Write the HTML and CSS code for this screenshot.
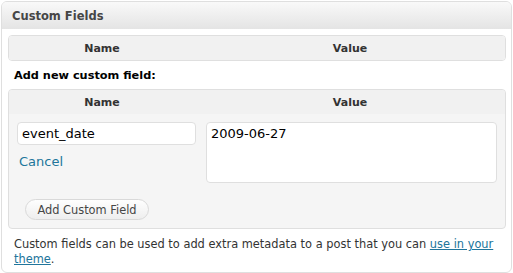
FILE: index.html
```html
<!DOCTYPE html>
<html>
<head>
<meta charset="utf-8">
<link rel="stylesheet" href="styles.css">
</head>
<body>
<div class="postbox">
  <h3 class="hndle">Custom Fields</h3>
  <div class="inside">
    <div class="list-table">
      <div class="thead">
        <div class="th th-name">Name</div>
        <div class="th th-value">Value</div>
      </div>
    </div>
    <p class="add-label">Add new custom field:</p>
    <div class="list-table new-meta">
      <div class="thead">
        <div class="th th-name">Name</div>
        <div class="th th-value">Value</div>
      </div>
      <div class="tbody">
        <div class="cell-name">
          <input class="key-input" type="text" value="event_date">
          <a class="cancel" href="#">Cancel</a>
        </div>
        <div class="cell-value">
          <textarea class="value-input">2009-06-27</textarea>
        </div>
      </div>
      <div class="submit-row">
        <button class="button">Add Custom Field</button>
      </div>
    </div>
    <p class="help">Custom fields can be used to add extra metadata to a post that you can <a href="#">use in your theme</a>.</p>
  </div>
</div>
</body>
</html>
```
FILE: styles.css
```css
* { box-sizing: border-box; }
html, body { margin: 0; padding: 0; background: #ffffff; }
body {
  font-family: "DejaVu Sans", Verdana, sans-serif;
  font-size: 11px;
  color: #333333;
}
.postbox {
  margin: 1px 0 0 1px;
  width: 511px;
  height: 272px;
  border: 1px solid #dfdfdf;
  border-radius: 6px;
  background: #ffffff;
  overflow: hidden;
}
.hndle {
  margin: 0;
  height: 27px;
  padding: 0 0 0 10px;
  display: flex;
  align-items: center;
  font-size: 11.5px;
  font-weight: bold;
  color: #464646;
  background: linear-gradient(to bottom, #f9f9f9, #e4e4e4);
}
.inside {
  padding: 6px 5px 0 6px;
}
.list-table {
  border: 1px solid #dfdfdf;
  border-radius: 4px;
  background: #f1f1f1;
  overflow: hidden;
}
.thead {
  display: grid;
  grid-template-columns: 186px 1fr;
  height: 24px;
  align-items: center;
  background: #f1f1f1;
  font-weight: bold;
  color: #333333;
}
.th { text-align: center; }
.add-label {
  margin: 0;
  height: 28px;
  padding: 0 0 0 6px;
  display: flex;
  align-items: center;
  font-size: 11.3px;
  font-weight: bold;
  color: #000;
}
.new-meta { background: #f5f5f5; }
.tbody {
  display: grid;
  grid-template-columns: 189px 1fr;
  padding: 8px 7px 0 8px;
}
.cell-name { display: flex; flex-direction: column; align-items: flex-start; }
.key-input {
  width: 179px;
  height: 23px;
  margin: 0;
  padding: 0 4px;
  border: 1px solid #dfdfdf;
  border-radius: 4px;
  background: #fff;
  font-family: "DejaVu Sans", Verdana, sans-serif;
  font-size: 13px;
  color: #000;
}
.cancel {
  margin: 9px 0 0 2px;
  font-size: 13px;
  color: #21759b;
  text-decoration: none;
}
.value-input {
  display: block;
  width: 291px;
  height: 61px;
  margin: 0;
  padding: 3px 4px;
  border: 1px solid #dfdfdf;
  border-radius: 4px;
  background: #fff;
  resize: none;
  font-family: "DejaVu Sans", Verdana, sans-serif;
  font-size: 13px;
  color: #000;
}
.submit-row { padding: 16px 0 8px 16px; }
.button {
  height: 21px;
  width: 124px;
  padding: 0;
  border: 1px solid #d9d9d9;
  border-radius: 11px;
  background: linear-gradient(to bottom, #fefefe, #eeeeee);
  font-family: "DejaVu Sans", Verdana, sans-serif;
  font-size: 11.4px;
  color: #464646;
}
.help {
  margin: 8px 0 0 6px;
  font-size: 11.4px;
  line-height: 15px;
  color: #333;
}
.help a { color: #21759b; text-decoration: underline; }
```
